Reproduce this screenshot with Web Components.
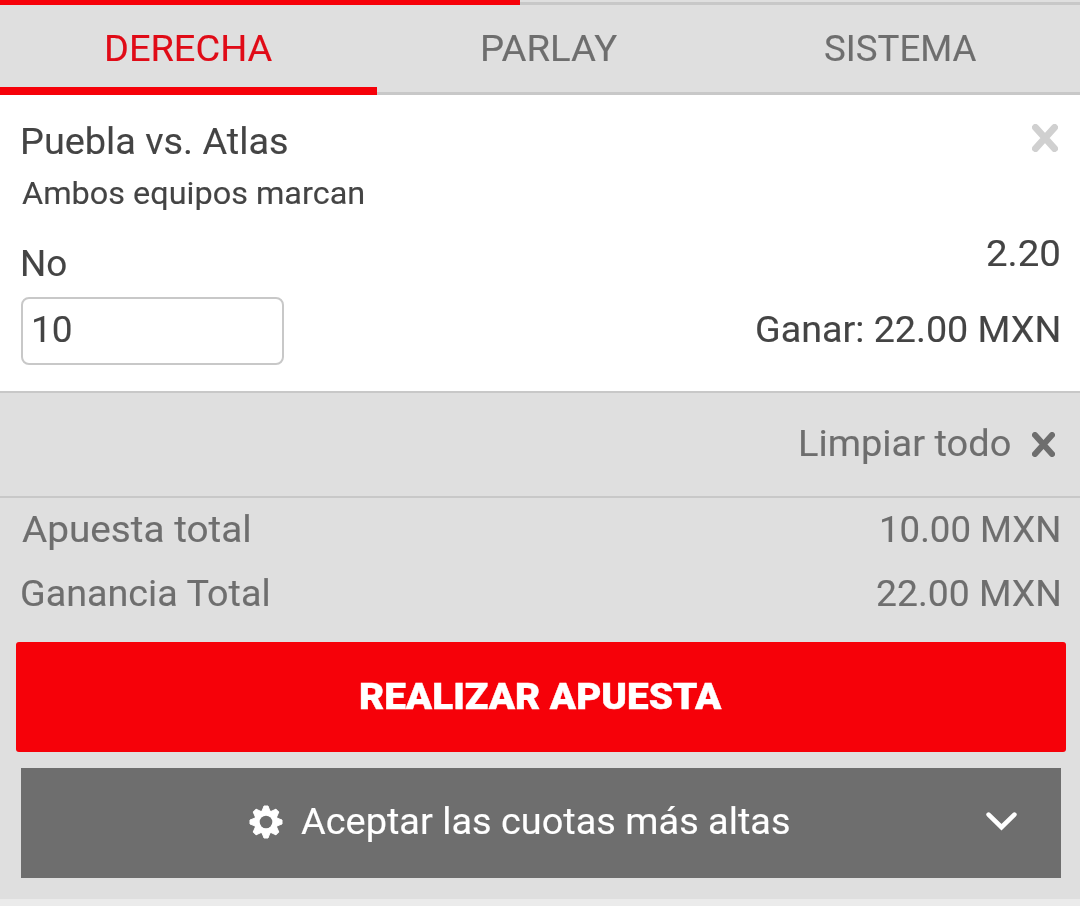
<!DOCTYPE html>
<html lang="es">
<head>
<meta charset="utf-8">
<title>Boleto de apuesta</title>
<style>
html,body{margin:0;height:100%;background:#ebebeb;overflow:hidden}
body{font-family:Roboto,"Liberation Sans",sans-serif;color:#444}
</style>
</head>
<body>
<bet-slip></bet-slip>
<script>
const define=(name,html,setup)=>{
  const t=document.createElement('template');
  t.innerHTML=html;
  customElements.define(name,class extends HTMLElement{
    constructor(){super();this.attachShadow({mode:'open'}).append(t.content.cloneNode(true));}
    connectedCallback(){if(setup)setup(this,this.shadowRoot);}
  });
};

/* One line of text, widened so that its glyphs span the measure given in "w". */
const ctx=document.createElement('canvas').getContext('2d');
define('wide-label',`<style>
:host{display:block;flex:none;white-space:nowrap;font-size:36.6px;line-height:44px;height:44px;font-weight:400}
:host([small]){font-size:31px}
:host([bold]){font-weight:900}
span{display:block;width:max-content;transform-origin:0 50%;-webkit-text-stroke:.12px currentColor}
:host([bold]) span{-webkit-text-stroke-width:.4px}
</style><span><slot></slot></span>`,(host,root)=>{
  const cs=getComputedStyle(host),text=host.textContent,w=+host.getAttribute('w');
  /* measured at ten times the size, since glyph bounds are rounded to whole pixels */
  ctx.font=`${cs.fontWeight} ${parseFloat(cs.fontSize)*10}px ${cs.fontFamily}`;
  const m=ctx.measureText(text);
  const left=m.actualBoundingBoxLeft/10,ink=m.actualBoundingBoxRight/10+left;
  const k=w/ink;
  const s=root.querySelector('span');
  s.style.transform=`scaleX(${k.toFixed(4)})`;
  s.style.marginLeft=(left*k).toFixed(2)+'px';
  host.style.width=w+'px';
});

define('close-icon',`<style>
:host{display:block;flex:none;width:26px;height:28px}
svg{display:block;width:100%;height:100%}
</style><svg viewBox="0 0 26 28" preserveAspectRatio="none"><path d="M3.4 3.4 22.6 24.6M22.6 3.4 3.4 24.6" fill="none" stroke="currentColor" stroke-width="6.8" stroke-linecap="round"/></svg>`);

define('gear-icon',`<style>
:host{display:block;flex:none;width:34px;height:34px}
svg{display:block}
</style><svg width="34" height="34" viewBox="-17 -17 34 34"><defs><mask id="m"><rect x="-17" y="-17" width="34" height="34" fill="#fff"/><circle r="6.3" fill="#000"/></mask></defs><g mask="url(#m)" fill="currentColor" stroke="currentColor" stroke-width="1" stroke-linejoin="round"><circle r="11.6"/><path d="M-4.3-10-2-16H2L4.3-10V10L2 16H-2L-4.3 10Z"/><path transform="rotate(45)" d="M-4.3-10-2-16H2L4.3-10V10L2 16H-2L-4.3 10Z"/><path transform="rotate(90)" d="M-4.3-10-2-16H2L4.3-10V10L2 16H-2L-4.3 10Z"/><path transform="rotate(135)" d="M-4.3-10-2-16H2L4.3-10V10L2 16H-2L-4.3 10Z"/></g></svg>`);

define('chevron-icon',`<style>
:host{display:block;flex:none;width:31px;height:19px}
svg{display:block}
</style><svg width="31" height="19" viewBox="0 0 31 19"><path d="M2.6 2.6 15.5 15.2 28.4 2.6" fill="none" stroke="currentColor" stroke-width="4.6" stroke-linecap="round"/></svg>`);

define('slip-tab',`<style>
:host{display:flex;box-sizing:border-box;height:90px;padding:22px 0 0 1px;justify-content:center;border-bottom:3px solid #c8c8c8;color:#6e6e6e}
:host([active]){color:#e00b17;border-bottom:8px solid #f60109}
</style><slot></slot>`);

define('slip-tabs',`<style>
:host{display:block;background:#dfdfdf}
.progress{height:3px;padding-top:2px;display:grid;grid-template-columns:520px 1fr}
i{display:block;background:#c8c8c8}
i.on{background:#f60109;margin-top:-2px}
nav{display:grid;grid-template-columns:377px 344px 1fr}
</style><div class="progress"><i class="on"></i><i></i></div><nav>
<slip-tab active><wide-label w="165">DERECHA</wide-label></slip-tab>
<slip-tab><wide-label w="134">PARLAY</wide-label></slip-tab>
<slip-tab><wide-label w="151">SISTEMA</wide-label></slip-tab></nav>`);

define('stake-field',`<style>
:host{display:block;box-sizing:border-box;width:263px;height:68px;border:2px solid #c8c8c8;border-radius:8px;padding:9px 0 0 11px}
</style><slot></slot>`);

define('bet-card',`<style>
:host{display:flex;justify-content:space-between;box-sizing:border-box;height:298px;background:#fff;border-bottom:2px solid #c8c8c8;padding:25px 21px 0 21px}
.l,.r{display:flex;flex-direction:column}
.r{align-items:flex-end}
.l>wide-label{margin-left:2px}
.l>wide-label[small]{margin:8px 0 0 1px}
.l>wide-label.pick{margin:26px 0 0 2px}
stake-field{margin-top:11px}
close-icon{color:#d0d0d0;margin:4px 1px 0 0}
.odd{margin-top:80px}
.win{margin-top:32px}
</style><div class="l">
<wide-label w="264">Puebla vs. Atlas</wide-label>
<wide-label small w="341">Ambos equipos marcan</wide-label>
<wide-label class="pick" w="43">No</wide-label>
<stake-field><wide-label w="37">10</wide-label></stake-field></div>
<div class="r"><close-icon></close-icon>
<wide-label class="odd" w="72">2.20</wide-label>
<wide-label class="win" w="302">Ganar: 22.00 MXN</wide-label></div>`);

define('clear-all',`<style>
:host{display:flex;justify-content:flex-end;box-sizing:border-box;height:105px;padding:29px 25px 0 0;border-bottom:2px solid #c8c8c8;color:#6e6e6e}
close-icon{width:23px;height:25px;margin:10px 0 0 22px}
</style><wide-label w="209">Limpiar todo</wide-label><close-icon></close-icon>`);

define('total-row',`<style>
:host{display:flex;justify-content:space-between;height:64px;padding:0 21px 0 22px;color:#6e6e6e}
</style><slot></slot>`);

define('place-button',`<style>
:host{display:flex;justify-content:center;box-sizing:border-box;height:110px;margin:0 14px 0 16px;padding-top:33px;background:#f60109;border-radius:3px;color:#fff}
</style><slot></slot>`);

define('odds-option',`<style>
:host{display:flex;box-sizing:border-box;height:110px;margin:16px 19px 0 21px;padding:31px 44px 0 228px;background:#6e6e6e;color:#fff}
gear-icon{margin-top:6px}
wide-label{margin:1px 0 0 18px}
chevron-icon{margin:13px 0 0 auto}
</style><gear-icon></gear-icon><wide-label w="488">Aceptar las cuotas más altas</wide-label><chevron-icon></chevron-icon>`);

define('bet-slip',`<style>
:host{display:block;height:899px;background:#dfdfdf}
.totals{box-sizing:border-box;padding-top:10px;height:144px}
</style><slip-tabs></slip-tabs><bet-card></bet-card><clear-all></clear-all>
<div class="totals">
<total-row><wide-label w="227">Apuesta total</wide-label><wide-label w="177">10.00 MXN</wide-label></total-row>
<total-row><wide-label w="247">Ganancia Total</wide-label><wide-label w="182">22.00 MXN</wide-label></total-row></div>
<place-button><wide-label bold w="361">REALIZAR APUESTA</wide-label></place-button>
<odds-option></odds-option>`);
</script>
</body>
</html>
